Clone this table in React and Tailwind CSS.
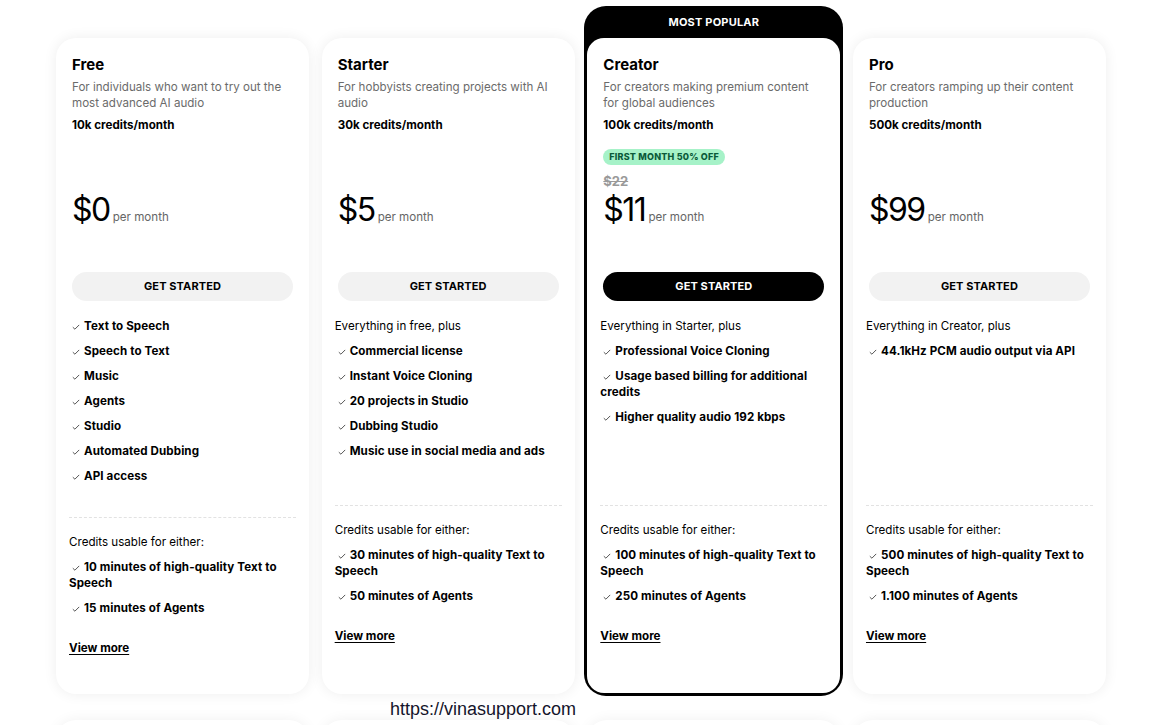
import React from 'react'

const plans = [
  {
    name: 'Free',
    desc: 'For individuals who want to try out the most advanced AI audio',
    credits: '10k credits/month',
    price: '$0',
    features: ['Text to Speech', 'Speech to Text', 'Music', 'Agents', 'Studio', 'Automated Dubbing', 'API access'],
    usage: ['10 minutes of high-quality Text to Speech', '15 minutes of Agents'],
  },
  {
    name: 'Starter',
    desc: 'For hobbyists creating projects with AI audio',
    credits: '30k credits/month',
    price: '$5',
    intro: 'Everything in free, plus',
    features: ['Commercial license', 'Instant Voice Cloning', '20 projects in Studio', 'Dubbing Studio', 'Music use in social media and ads'],
    usage: ['30 minutes of high-quality Text to Speech', '50 minutes of Agents'],
  },
  {
    name: 'Creator',
    desc: 'For creators making premium content for global audiences',
    credits: '100k credits/month',
    price: '$11',
    oldPrice: '$22',
    badge: 'FIRST MONTH 50% OFF',
    intro: 'Everything in Starter, plus',
    features: ['Professional Voice Cloning', 'Usage based billing for additional credits', 'Higher quality audio 192 kbps'],
    usage: ['100 minutes of high-quality Text to Speech', '250 minutes of Agents'],
    popular: true,
  },
  {
    name: 'Pro',
    desc: 'For creators ramping up their content production',
    credits: '500k credits/month',
    price: '$99',
    intro: 'Everything in Creator, plus',
    features: ['44.1kHz PCM audio output via API'],
    usage: ['500 minutes of high-quality Text to Speech', '1.100 minutes of Agents'],
  },
]

function Check() {
  return (
    <svg width="8" height="6" viewBox="0 0 8 6" className="inline-block ml-[3px] mr-[4px] align-baseline" fill="none">
      <path d="M0.8 3.2 L2.9 5.2 L7.2 0.9" stroke="#555" strokeWidth="1" />
    </svg>
  )
}

function Item({ children }) {
  return (
    <li className="text-[11.6px] leading-[16px] font-bold tracking-[0.1px] text-black">
      <Check />
      {children}
    </li>
  )
}

function Card({ plan }) {
  return (
    <div className="flex flex-col h-full bg-white rounded-[20px] shadow-[0_0_14px_rgba(0,0,0,0.07)]">
      {/* Kopf + Preis */}
      <div className="flex flex-col h-[234px] px-4 pt-[17px] pb-[46px]">
        <h3 className="text-[15px] leading-[20px] font-bold text-black">{plan.name}</h3>
        <p className="mt-[4px] text-[11.6px] leading-[16px] text-[#6b6b6b]">{plan.desc}</p>
        <p className="mt-[6px] text-[11.6px] leading-[16px] font-bold text-black">{plan.credits}</p>
        {plan.badge && (
          <span className="mt-4 self-start rounded-full bg-[#a6f2c8] px-[6px] h-[16px] flex items-center text-[9px] font-extrabold tracking-[0.2px] text-[#0b5a3a]">
            {plan.badge}
          </span>
        )}
        <div className="mt-auto">
          {plan.oldPrice && (
            <p className="text-[13px] leading-[16px] font-bold text-[#9a9a9a] line-through mb-[6px]">{plan.oldPrice}</p>
          )}
          <div className="flex items-baseline gap-[3px]">
            <span className="text-[32px] leading-[30px] tracking-[-1.5px] text-black">{plan.price}</span>
            <span className="text-[11.6px] text-[#666]">per month</span>
          </div>
        </div>
      </div>

      <button
        className={`mx-4 h-[29px] rounded-full text-[11px] font-bold tracking-[0.1px] ${
          plan.popular ? 'bg-black text-white' : 'bg-[#f2f2f2] text-black'
        }`}
      >
        GET STARTED
      </button>

      {/* Features */}
      <div className="mx-[13px] pt-[17px] pb-[33px] min-h-[205px] border-b border-dashed border-[#e2e2e2]">
        {plan.intro && <p className="text-[11.6px] leading-[16px] text-black mb-[9px]">{plan.intro}</p>}
        <ul className="flex flex-col gap-[9px]">
          {plan.features.map(f => <Item key={f}>{f}</Item>)}
        </ul>
      </div>

      {/* Credits */}
      <div className="px-[13px] pt-4 pb-[38px] flex flex-col">
        <p className="text-[11.6px] leading-[16px] text-black mb-[9px]">Credits usable for either:</p>
        <ul className="flex flex-col gap-[9px]">
          {plan.usage.map(u => <Item key={u}>{u}</Item>)}
        </ul>
        <a className="mt-6 self-start text-[11.6px] leading-[16px] font-bold text-black underline underline-offset-2">View more</a>
      </div>
    </div>
  )
}

export default function App() {
  return (
    <div className="relative h-[725px] overflow-hidden bg-white" style={{ fontFamily: 'Inter, "Liberation Sans", sans-serif' }}>
      <div className="grid grid-cols-[repeat(4,253px)] gap-x-[12.67px] pl-[56px] pt-[38px]">
        {plans.map(p =>
          p.popular ? (
            <div key={p.name} className="flex flex-col -mt-[32px] -mx-[3px] -mb-[2px] bg-black rounded-[22px] px-[3px] pb-[3px]">
              <div className="h-[32px] flex items-center justify-center text-[11px] font-bold text-white tracking-[0.2px]">
                MOST POPULAR
              </div>
              <div className="flex-1 [&>div]:rounded-[17px] [&>div]:shadow-none">
                <Card plan={p} />
              </div>
            </div>
          ) : (
            <Card key={p.name} plan={p} />
          )
        )}
      </div>

      {/* nächste Reihe, nur angeschnitten */}
      <div className="grid grid-cols-[repeat(4,253px)] gap-x-[12.67px] pl-[56px] mt-[26px]">
        {plans.map(p => (
          <div key={p.name} className="h-[40px] rounded-[20px] bg-white shadow-[0_0_14px_rgba(0,0,0,0.06)]" />
        ))}
      </div>

      <span
        className="absolute left-[390px] top-[696px] text-[18px] text-[#14142b]"
        style={{ fontFamily: '"Liberation Sans", sans-serif' }}
      >
        https://vinasupport.com
      </span>
    </div>
  )
}
